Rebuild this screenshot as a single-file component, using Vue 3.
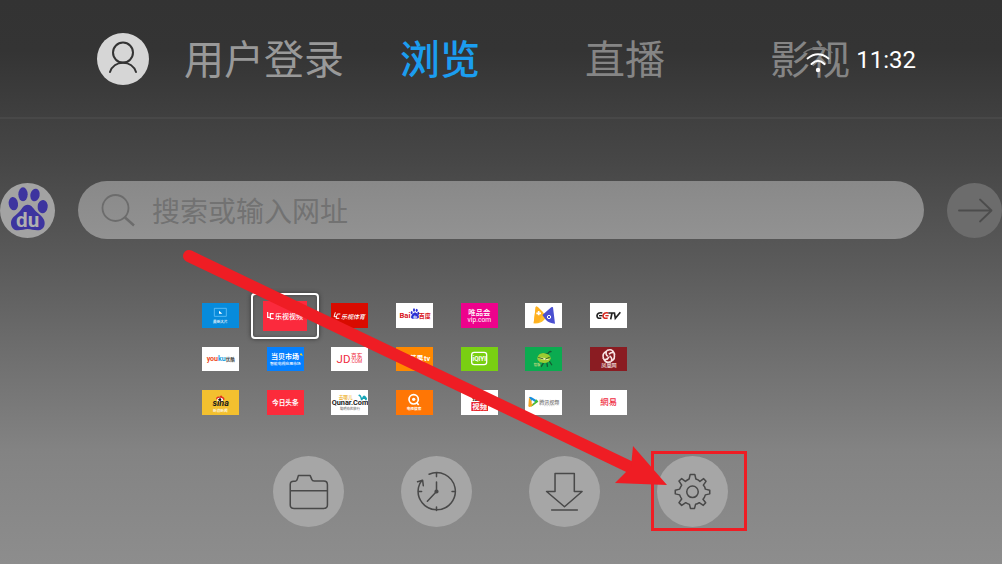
<script setup>
import { ref } from 'vue'

const query = ref('')
const time = ref('11:32')
</script>

<template>
  <div class="screen">
    <header class="topbar">
      <button class="avatar" type="button" aria-label="用户">
        <svg viewBox="0 0 52 52" class="fill">
          <g fill="none" stroke="#333" stroke-width="2" stroke-linecap="round">
            <circle cx="26" cy="19.600" r="10" />
            <path d="M13 39 C17 26.500 35 26.500 39 39" />
          </g>
        </svg>
      </button>
      <nav class="tabs">
        <a href="#login" class="tab login">用户登录</a>
        <a href="#browse" class="tab active">浏览</a>
        <a href="#live" class="tab">直播</a>
        <a href="#film" class="tab">影视</a>
      </nav>
      <div class="status">
        <svg class="wifi" viewBox="0 0 32 28" aria-label="Wi-Fi">
          <g fill="none" stroke-linecap="round">
            <path d="M2 6.500 Q16 -3 30 6.500" stroke="#777" stroke-width="1.500" />
            <path d="M5.500 12.500 Q16 4 26.500 12.500" stroke="#fff" stroke-width="1.800" />
            <path d="M9.500 18 Q16 11.500 22.500 18" stroke="#fff" stroke-width="2" />
          </g>
          <circle cx="16" cy="24" r="2.200" fill="#fff" />
        </svg>
        <time>{{ time }}</time>
      </div>
    </header>

    <main>
      <form class="search" @submit.prevent>
        <button class="engine" type="button" aria-label="百度">
          <svg viewBox="0 0 165 165" class="fill">
            <g fill="#3d349f">
              <ellipse cx="40" cy="62" rx="14" ry="20" transform="rotate(-8 40 62)" />
              <ellipse cx="69" cy="34" rx="14" ry="21" />
              <ellipse cx="105" cy="36" rx="14" ry="19" transform="rotate(12 105 36)" />
              <ellipse cx="128" cy="71" rx="15" ry="20" transform="rotate(6 128 71)" />
              <path d="M83 65 C96 65 101 79 110 87 C122 98 134 106 134 120 C134 135 125 142 112 142 C101 142 94 138 83 138 C72 138 67 142 54 142 C41 142 33 133 33 119 C33 104 47 98 57 87 C66 78 70 65 83 65Z" />
            </g>
            <text x="83" y="131" class="paw-text">du</text>
          </svg>
        </button>
        <label class="field">
          <svg class="lens" viewBox="0 0 34 34" aria-hidden="true">
            <g fill="none" stroke="#6c6c6c" stroke-width="1.800">
              <circle cx="14.500" cy="15" r="13" />
              <path d="M24 24.500 L33 32.500" stroke-width="2.400" />
            </g>
          </svg>
          <input v-model="query" type="text" placeholder="搜索或输入网址" aria-label="搜索或输入网址" />
        </label>
        <button class="go" type="submit" aria-label="前往">
          <svg viewBox="0 0 55 55" class="fill">
            <path d="M12 27.500 H44 M33 16.500 L44.500 27.500 L33 38.500" fill="none" stroke="#4c4c4c" stroke-width="1.800" stroke-linecap="round" stroke-linejoin="round" />
          </svg>
        </button>
      </form>

      <section class="sites">
        <a href="#s1" class="tile azure">
          <svg viewBox="0 0 111 75">
            <path d="M37 16 H73 V40 H37Z" fill="none" stroke="#7fd0ff" stroke-width="2" />
            <path d="M51 23 L61 32 H51Z" fill="#fff" />
            <text x="55" y="59" class="t11 light">最新大片</text>
          </svg>
        </a>
        <a href="#s2" class="tile focused">
          <span class="focus-card">
            <svg viewBox="0 0 132 90">
              <path d="M14 33 V49 H24 M32 38 H22 V53 H32" fill="none" stroke="#fff" stroke-width="3.500" />
              <text x="78" y="54" class="t21 light">乐视视频</text>
            </svg>
          </span>
        </a>
        <a href="#s3" class="tile crimson">
          <svg viewBox="0 0 111 75">
            <path d="M13 28 L9 41 H17 M28 33 H19 L15 46 H25" fill="none" stroke="#fff" stroke-width="3" />
            <text x="66" y="47" class="t18 light slant">乐视体育</text>
          </svg>
        </a>
        <a href="#s4" class="tile">
          <svg viewBox="0 0 111 75">
            <text x="27" y="46" class="t23 latin red">Bai</text>
            <g fill="#2a2fd3">
              <ellipse cx="47" cy="29" rx="3" ry="5" />
              <ellipse cx="54" cy="21" rx="3" ry="5" />
              <ellipse cx="62" cy="22" rx="3" ry="5" />
              <ellipse cx="67" cy="31" rx="3" ry="5" />
              <path d="M57 28 C63 30 69 37 69 42 C68 48 62 47 57 46 C51 48 45 48 45 42 C46 36 52 30 57 28Z" />
            </g>
            <text x="57" y="44" class="t10 latin light">du</text>
            <text x="86" y="46" class="t18 red heavy">百度</text>
          </svg>
        </a>
        <a href="#s5" class="tile magenta">
          <svg viewBox="0 0 111 75">
            <text x="55" y="35" class="t22 light">唯品会</text>
            <text x="55" y="56" class="t20 latin light thin">vip.com</text>
          </svg>
        </a>
        <a href="#s6" class="tile">
          <svg viewBox="0 0 111 75">
            <path d="M32 12 Q34 9 38 12 L66 40 L57 51 Q46 63 26 61Z" fill="#ffc02b" />
            <path d="M32 12 Q34 9 38 12 L54 28 L42 58 L26 61Z" fill="#ffb020" />
            <path d="M84 13 Q80 11 76 15 L52 36 L63 51 Q72 61 90 62Z" fill="#4a4fd0" />
            <path d="M41 24 V37 M34 31 H48" stroke="#fff" stroke-width="5" />
            <circle cx="72" cy="42" r="5" fill="none" stroke="#fff" stroke-width="3" />
          </svg>
        </a>
        <a href="#s7" class="tile">
          <svg viewBox="0 0 111 75" fill="none" stroke-width="5">
            <path d="M37 30 Q22 27 21 38 Q21 48 34 45" stroke="#222" />
            <path d="M55 30 Q41 27 39 38 Q39 48 53 45" stroke="#d8281f" />
            <path d="M27 38 H37" stroke="#222" stroke-width="4" />
            <path d="M46 38 H56" stroke="#d8281f" stroke-width="4" />
            <path d="M55 30 H73 M66 30 L62 49 M73 28 L76 46 L91 28" stroke="#222" />
          </svg>
        </a>

        <a href="#s8" class="tile">
          <svg viewBox="0 0 111 75">
            <text x="30" y="43" class="t22 latin orange">you</text>
            <text x="60" y="43" class="t22 latin sky">ku</text>
            <text x="86" y="43" class="t14 dark">优酷</text>
          </svg>
        </a>
        <a href="#s9" class="tile blue">
          <svg viewBox="0 0 111 75">
            <text x="54" y="37" class="t22 light heavy">当贝市场</text>
            <text x="55" y="55" class="t12 light">智能电视应用市场</text>
            <path d="M100 25 L104 18 L110 27Z" fill="#ffd21e" />
          </svg>
        </a>
        <a href="#s10" class="tile">
          <svg viewBox="0 0 111 75">
            <text x="37" y="50" class="t36 latin rose thin">JD</text>
            <text x="78" y="34" class="t18 rose">京东</text>
            <text x="77" y="50" class="t15 latin rose thin">.COM</text>
          </svg>
        </a>
        <a href="#s11" class="tile amber">
          <svg viewBox="0 0 111 75">
            <text x="62" y="45" class="t22 light heavy">芒果</text>
            <text x="95" y="44" class="t23 latin light">tv</text>
          </svg>
        </a>
        <a href="#s12" class="tile lime">
          <svg viewBox="0 0 111 75">
            <rect x="31" y="17" width="47" height="38" rx="8" fill="none" stroke="#fff" stroke-width="4" />
            <text x="55" y="43" class="t20 latin light">iQIYI</text>
          </svg>
        </a>
        <a href="#s13" class="tile green">
          <svg viewBox="0 0 111 75">
            <path d="M48 22 Q60 26 66 20 M68 22 Q76 10 80 16 M56 48 L48 62 M66 48 L68 62 M73 43 L82 57" fill="none" stroke="#155b32" stroke-width="4" />
            <path d="M36 37 Q38 20 55 19 Q77 22 78 35 Q76 49 56 50 Q40 49 36 37Z" fill="#9ccb31" />
            <path d="M38 34 Q54 31 74 38 Q59 45 38 34Z" fill="#e9f3a5" />
            <path d="M39 33 L55 37 M61 38 L75 32" stroke="#315b21" stroke-width="3" />
            <text x="35" y="59" class="t10 cream">悟饭</text>
          </svg>
        </a>
        <a href="#s14" class="tile maroon">
          <svg viewBox="0 0 111 75">
            <g fill="none" stroke="#f9e5e5" stroke-width="5">
              <path d="M40 37 Q34 21 49 13 Q45 24 54 29" />
              <path d="M51 11 Q67 4 73 19 Q64 14 57 23" />
              <path d="M73 22 Q78 38 64 45 Q69 35 59 28" />
              <path d="M62 46 Q47 52 41 38 Q52 42 57 31" />
            </g>
            <text x="57" y="61" class="t16 light thin">凤凰网</text>
          </svg>
        </a>

        <a href="#s15" class="tile gold">
          <svg viewBox="0 0 111 75">
            <path d="M42 28 Q43 17 53 20 Q58 13 61 20 Q69 22 67 30Z" fill="#e43320" />
            <ellipse cx="54" cy="29" rx="9" ry="6" fill="#fff" />
            <circle cx="54" cy="29" r="4" fill="#111" />
            <text x="56" y="47" class="t27 latin dark slant">sina</text>
            <text x="55" y="67" class="t11 light">新浪新闻</text>
          </svg>
        </a>
        <a href="#s16" class="tile scarlet">
          <svg viewBox="0 0 111 75">
            <text x="55" y="45" class="t20 light heavy">今日头条</text>
          </svg>
        </a>
        <a href="#s17" class="tile">
          <svg viewBox="0 0 111 75">
            <text x="44" y="27" class="t14 yellow">去哪儿</text>
            <path d="M82 17 Q84 11 89 16 L93 24 Q99 9 108 25 L107 31 H103 L101 27 H96 L94 31 H90 L87 20Z" fill="#16a5b6" />
            <text x="57" y="46" class="t22 latin dark">Qunar.Com</text>
            <text x="57" y="61" class="t10 gray">聪明你的旅行</text>
          </svg>
        </a>
        <a href="#s18" class="tile tangerine">
          <svg viewBox="0 0 111 75">
            <circle cx="53" cy="28" r="14" fill="none" stroke="#fff" stroke-width="5" />
            <circle cx="53" cy="28" r="5" fill="#fff" />
            <path d="M62 38 L68 45" stroke="#fff" stroke-width="5" />
            <text x="54" y="61" class="t11 light heavy">电视搜索</text>
          </svg>
        </a>
        <a href="#s19" class="tile">
          <svg viewBox="0 0 111 75">
            <rect x="31" y="36" width="50" height="27" fill="#e9232a" />
            <text x="56" y="29" class="t22 dark heavy">搜狐</text>
            <text x="56" y="58" class="t22 light heavy">视频</text>
          </svg>
        </a>
        <a href="#s20" class="tile">
          <svg viewBox="0 0 111 75">
            <path d="M12 22 Q14 18 20 22 L40 34 L25 43Z" fill="#168fdd" />
            <path d="M12 22 L10 48 Q12 54 20 49 L27 44Z" fill="#f5a623" />
            <path d="M18 51 L40 35 L34 28Z" fill="#48bd35" />
            <path d="M20 29 L30 36 L20 43Z" fill="#fff" />
            <text x="73" y="41" class="t15 gray">腾讯视频</text>
            <path d="M57 47 H88" stroke="#888" stroke-dasharray="5 2" />
          </svg>
        </a>
        <a href="#s21" class="tile">
          <svg viewBox="0 0 111 75">
            <text x="56" y="45" class="t25 rose">網易</text>
          </svg>
        </a>
      </section>

      <section class="tools">
        <button type="button" aria-label="收藏夹">
          <svg viewBox="0 0 210 210" class="fill line">
            <path d="M62 155 Q51 155 51 145 V84 Q51 75 61 75 H66 Q70 75 72 68 L75 58 H110 L115 70 Q116 74 122 74 H150 Q161 74 161 85 V145 Q161 155 150 155Z M51 103 H161" />
          </svg>
        </button>
        <button type="button" aria-label="历史记录">
          <svg viewBox="0 0 210 210" class="fill line">
            <path d="M83 54 A55 55 0 1 1 52 92 Q54 82 62 72 M49 76 L64 72 L66 88 M105 51 V61 M105 151 V161 M51 105 H61 M151 105 H161 M105 77 V105 L78 134" />
            <circle cx="105" cy="105" r="4" class="dot" />
          </svg>
        </button>
        <button type="button" aria-label="下载">
          <svg viewBox="0 0 210 210" class="fill line">
            <path d="M77 52 H134 V105 H157 L105 150 L52 105 H77Z M67 160 H143" />
          </svg>
        </button>
        <button type="button" aria-label="设置">
          <svg viewBox="0 0 210 210" class="fill line">
            <path d="M98 55 H112 L115 68 Q122 70 127 75 L138 67 L145 75 L137 86 Q142 92 143 98 L156 101 V112 L143 115 Q141 123 136 128 L144 138 L137 146 L125 138 Q119 142 114 143 L111 155 H99 L96 143 Q90 141 85 138 L73 146 L65 138 L73 127 Q69 121 67 115 L54 112 V101 L67 98 Q69 92 73 86 L65 74 L73 67 L84 75 Q90 70 95 68Z" />
            <circle cx="105" cy="106" r="17" />
          </svg>
          <span class="marker"></span>
        </button>
      </section>
    </main>

    <svg class="arrow" viewBox="0 0 1002 564" preserveAspectRatio="xMidYMin meet" aria-hidden="true">
      <path d="M189 256 L632 468" stroke="#ef1d24" stroke-width="12" stroke-linecap="round" />
      <path d="M667 485 L633 446 L631 467 L615 483Z" fill="#ef1d24" />
    </svg>
  </div>
</template>

<style>
body {
  margin: 0;
}
</style>

<style scoped>
.screen {
  position: relative;
  box-sizing: border-box;
  min-height: 100vh;
  padding-bottom: 37px;
  overflow: hidden;
  font-family: Roboto, "Noto Sans CJK SC", sans-serif;
  background: linear-gradient(#333 0%, #343434 9%, #404040 21%, #474747 29%, #5c5c5c 48%, #6b6b6b 60%, #838383 80%, #8d8d8d 100%);
}
button {
  position: relative;
  flex: none;
  padding: 0;
  border: 0;
  border-radius: 50%;
}
a {
  text-decoration: none;
}
.fill {
  display: block;
  width: 100%;
  height: 100%;
}
.topbar {
  position: relative;
  display: flex;
  align-items: center;
  height: 117px;
  padding-left: 97px;
  border-bottom: 2px solid #484848;
}
.avatar {
  width: 52px;
  height: 52px;
  background: #d6d6d6;
}
.tabs {
  display: flex;
  gap: 105px;
  margin-left: 35px;
  padding-bottom: 3px;
}
.tab {
  font-family: "Noto Sans CJK SC", sans-serif;
  font-size: 40px;
  line-height: 60px;
  color: #858585;
  white-space: nowrap;
}
.login {
  margin-right: -49px;
  color: #999;
}
.active {
  font-weight: 500;
  color: #1b9df0;
}
.status {
  position: absolute;
  top: 44px;
  right: 86px;
  display: flex;
  align-items: center;
  gap: 22px;
  font-size: 24px;
  line-height: 32px;
  color: #fff;
}
.wifi {
  width: 32px;
  height: 28px;
}
.search {
  display: flex;
  align-items: center;
  gap: 23px;
  margin-top: 62px;
}
.engine,
.go {
  width: 55px;
  height: 55px;
}
.engine {
  background: #a3a3a3;
}
.go {
  background: #6c6c6c;
}
.paw-text {
  font: 700 62px Roboto, sans-serif;
  text-anchor: middle;
  fill: #b0b0b0;
}
.field {
  display: flex;
  flex: 1;
  align-items: center;
  gap: 17px;
  height: 58px;
  padding: 0 23px;
  border-radius: 29px;
  background: linear-gradient(#898989, #929292);
}
.lens {
  flex: none;
  width: 34px;
  height: 34px;
}
.field input {
  flex: 1;
  min-width: 0;
  height: 40px;
  padding: 0;
  border: 0;
  outline: 0;
  background: none;
  font: 400 28px "Noto Sans CJK SC", sans-serif;
  color: #333;
}
.field input::placeholder {
  color: #727272;
  opacity: 1;
}
.sites {
  display: grid;
  grid-template-columns: repeat(7, 37px);
  grid-template-rows: 25px 24px 25px;
  justify-content: space-between;
  row-gap: 19px;
  width: 425px;
  margin: 64px 0 0 202px;
}
.tile {
  position: relative;
  background: #fff;
}
.tile svg {
  display: block;
  width: 100%;
  height: 100%;
}
.focused {
  background: none;
}
.focus-card {
  position: absolute;
  inset: -10px -15px -11px -16px;
  padding: 6px 10px;
  border: 2px solid #fff;
  border-radius: 4px;
  box-shadow: 0 0 4px #333, inset 0 0 3px #444;
}
.focus-card svg {
  background: #fb2a3d;
}
.azure { background: #078bdc; }
.crimson { background: #d90b00; }
.magenta { background: #ed028c; }
.blue { background: #0480ff; }
.amber { background: #ff8800; }
.lime { background: #79cf12; }
.green { background: #0bab50; }
.maroon { background: #8a1c22; }
.gold { background: #f3c02f; }
.scarlet { background: #fc2b3b; }
.tangerine { background: #ff7605; }

.tile text {
  font-family: "Noto Sans CJK SC", sans-serif;
  font-weight: 500;
  text-anchor: middle;
}
.tile .latin { font-family: Roboto, sans-serif; font-weight: 700; }
.tile .thin { font-weight: 400; }
.tile .heavy { font-weight: 700; }
.slant { font-style: italic; }
.t10 { font-size: 10px; }
.t11 { font-size: 11px; }
.t12 { font-size: 12px; }
.t14 { font-size: 14px; }
.t15 { font-size: 15px; }
.t16 { font-size: 16px; }
.t18 { font-size: 18px; }
.t20 { font-size: 20px; }
.t21 { font-size: 21px; }
.t22 { font-size: 22px; }
.t23 { font-size: 23px; }
.t25 { font-size: 25px; }
.t27 { font-size: 27px; }
.t36 { font-size: 36px; }
.light { fill: #fff; }
.red { fill: #d9141b; }
.rose { fill: #ef2c3f; }
.orange { fill: #ee4a23; }
.sky { fill: #1b9fe0; }
.dark { fill: #1c1c1c; }
.gray { fill: #777; }
.cream { fill: #e7e28a; }
.yellow { fill: #eeb02a; }

.tools {
  display: flex;
  justify-content: center;
  gap: 57px;
  margin-top: 41px;
  padding-right: 1px;
}
.tools button {
  width: 71px;
  height: 71px;
  background: #a6a6a6;
}
.line {
  fill: none;
  stroke: #494949;
  stroke-width: 4.5;
  stroke-linecap: round;
  stroke-linejoin: round;
}
.dot {
  fill: #494949;
}
.marker {
  position: absolute;
  inset: -5px -19px -4px -6px;
  border: 3px solid #ef1d24;
}
.arrow {
  position: absolute;
  top: 0;
  left: 0;
  width: 100%;
  pointer-events: none;
}
</style>
